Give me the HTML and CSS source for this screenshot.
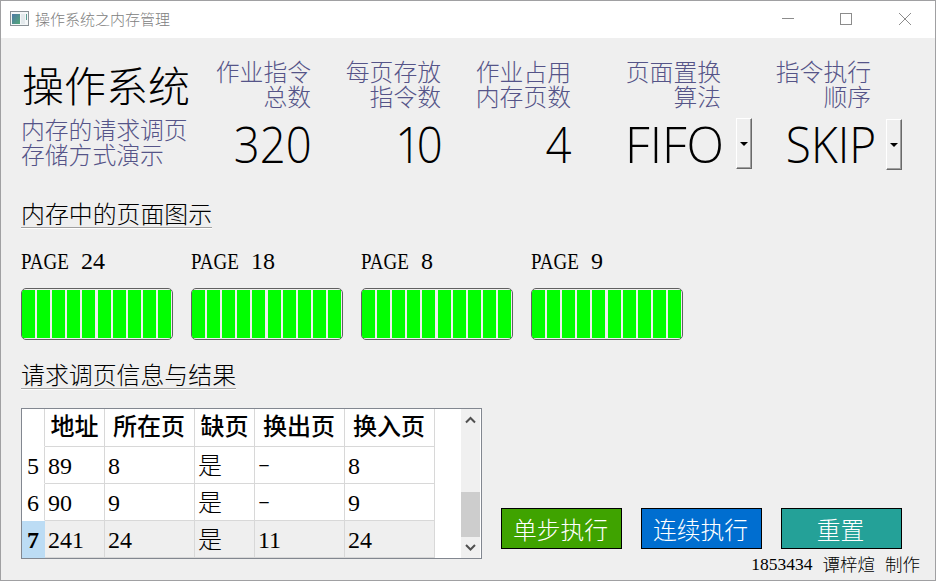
FILE: index.html
```html
<!DOCTYPE html>
<html lang="zh-CN">
<head>
<meta charset="utf-8">
<title>操作系统之内存管理</title>
<link rel="stylesheet" href="styles.css">
</head>
<body>
<div class="window">
  <header class="titlebar">
    <svg class="app-icon" width="20" height="16" viewBox="0 0 20 16">
      <defs><linearGradient id="g" x1="0" y1="0" x2="1" y2="1"><stop offset="0" stop-color="#4d78a6"/><stop offset="1" stop-color="#53a878"/></linearGradient></defs>
      <rect x="0.5" y="0.5" width="18" height="14" fill="#f4f7f8" stroke="#899196"/>
      <rect x="2" y="3" width="8" height="10" fill="url(#g)"/>
      <rect x="11" y="3" width="4" height="10" fill="#e3e9ec"/>
      <rect x="16" y="3" width="1" height="6" fill="#5b9c91"/>
    </svg>
    <span class="window-title">操作系统之内存管理</span>
    <svg class="controls" width="132" height="14" viewBox="0 0 132 14" fill="none" stroke="#8c8c8c">
      <path d="M0 6.5h12"/><rect x="58.500" y="1.500" width="11" height="11"/><path d="M117 1l12 12M129 1l-12 12"/>
    </svg>
  </header>
  <main class="content">
    <section class="summary">
      <div class="intro"><h1>操作系统</h1><p class="label"><span>内存的请求调页</span><span>存储方式演示</span></p></div>
      <div class="stat"><p class="label"><span>作业指令</span><span>总数</span></p><div class="value"><span class="num">320</span></div></div>
      <div class="stat"><p class="label"><span>每页存放</span><span>指令数</span></p><div class="value"><span class="num ten">10</span></div></div>
      <div class="stat"><p class="label"><span>作业占用</span><span>内存页数</span></p><div class="value"><span class="num">4</span></div></div>
      <div class="stat wide"><p class="label"><span>页面置换</span><span>算法</span></p><div class="value"><span class="num fifo">FIFO</span></div></div>
      <button class="drop"></button>
      <div class="stat order"><p class="label"><span>指令执行</span><span>顺序</span></p><div class="value"><span class="num skip">SKIP</span></div></div>
      <button class="drop second"></button>
    </section>
    <h2 class="heading">内存中的页面图示</h2>
    <section class="pages">
      <div class="page"><div class="page-name"><span class="word">PAGE</span><span>24</span></div><div class="bar"><i></i><i></i><i></i><i></i><i></i><i></i><i></i><i></i><i></i><i></i></div></div>
      <div class="page"><div class="page-name"><span class="word">PAGE</span><span>18</span></div><div class="bar"><i></i><i></i><i></i><i></i><i></i><i></i><i></i><i></i><i></i><i></i></div></div>
      <div class="page"><div class="page-name"><span class="word">PAGE</span><span>8</span></div><div class="bar"><i></i><i></i><i></i><i></i><i></i><i></i><i></i><i></i><i></i><i></i></div></div>
      <div class="page"><div class="page-name"><span class="word">PAGE</span><span>9</span></div><div class="bar"><i></i><i></i><i></i><i></i><i></i><i></i><i></i><i></i><i></i><i></i></div></div>
    </section>
    <h2 class="heading results">请求调页信息与结果</h2>
    <section class="bottom">
      <div class="table-box">
        <table>
          <colgroup><col class="c0"><col class="c60"><col class="c90"><col class="c60"><col class="c90"><col class="c90"></colgroup>
          <tr class="head"><th></th><th>地址</th><th>所在页</th><th>缺页</th><th>换出页</th><th>换入页</th></tr>
          <tr><td>5</td><td>89</td><td>8</td><td>是</td><td><span class="dash">-</span></td><td>8</td></tr>
          <tr><td>6</td><td>90</td><td>9</td><td>是</td><td><span class="dash">-</span></td><td>9</td></tr>
          <tr class="current"><td>7</td><td>241</td><td>24</td><td>是</td><td>11</td><td>24</td></tr>
        </table>
        <div class="scrollbar">
          <svg width="19" height="24" viewBox="0 0 19 24" fill="none" stroke="#505050" stroke-width="2"><path d="M5 13.500l4.500-4.500L14 13.500"/></svg>
          <div class="thumb"></div>
          <svg width="19" height="21" viewBox="0 0 19 21" fill="none" stroke="#505050" stroke-width="2"><path d="M5 8l4.500 4.500L14 8"/></svg>
        </div>
      </div>
      <div class="actions">
        <div class="buttons"><button class="btn green">单步执行</button><button class="btn blue">连续执行</button><button class="btn teal">重置</button></div>
        <div class="credit"><span class="id">1853434</span><span>谭梓煊</span><span>制作</span></div>
      </div>
    </section>
  </main>
</div>
</body>
</html>
```
FILE: styles.css
```css
* { box-sizing: border-box; margin: 0; padding: 0; }
body { font-family: "Noto Sans CJK SC", sans-serif; font-weight: 300; color: #000; }
.window { width: 936px; height: 581px; border: 1px solid #a0a0a2; background: #efefef; overflow: hidden; }
.titlebar { height: 37px; background: #fff; display: flex; align-items: center; padding: 0 21px 0 9px; }
.app-icon { margin-top: -1px; }
.window-title { font-size: 15px; color: #808080; margin: -2px 0 0 5px; flex: 1; }
.controls { margin-top: -2px; }
.content { padding-left: 20px; }
.summary { display: flex; height: 150px; padding-top: 21px; }
.intro { width: 170px; white-space: nowrap; }
h1 { font-size: 42px; font-weight: 300; line-height: 49px; height: 58px; padding-left: 1px; }
.label { font-size: 23.800px; line-height: 25px; color: #555488; white-space: nowrap; margin-top: -1px; margin-bottom: 1px; }
.stat .label { padding-right: 1px; }
.label span { display: block; }
.stat { width: 121px; text-align: right; }
.stat + .stat { width: 130px; }
.stat.wide { width: 150px; }
.stat.order { width: 120px; }
.value { height: 64px; line-height: 71px; font-family: "Open Sans", sans-serif; font-size: 50px; font-weight: 300; white-space: nowrap; }
.num { display: inline-block; transform-origin: right center; transform: scaleX(.91); }
.ten { letter-spacing: -5px; transform: translateX(-4px) scaleX(.91); }
.fifo { transform: translateX(2px) scaleX(.98); }
.skip { transform: translateX(4px) scaleX(.92); }
.drop { width: 16px; height: 51px; margin: 59px 0 0 14px; border: 1px solid; border-color: #fff #696969 #696969 #fff; box-shadow: inset -1px -1px #a0a0a0; background: #efefef; display: flex; align-items: center; justify-content: center; }
.drop::after { content: ""; border: 4px solid transparent; border-top-color: #000; border-bottom: 0; }
.drop.second { margin-top: 60px; }
.heading { font-size: 23.900px; font-weight: 300; line-height: 28px; height: 29px; width: max-content; border-bottom: 1px solid #a0a0a0; box-shadow: 0 1px #fff; margin-top: 11px; }
.pages { display: flex; gap: 18px; margin-top: 18px; }
.page { width: 152px; }
.page-name { display: flex; font: 24px/30px "Liberation Serif", serif; height: 42px; }
.word { width: 60px; display: block; transform: scaleX(.79); transform-origin: left; }
.bar { height: 52px; border: 1px solid #606060; border-radius: 5px; padding: 1px 1px 1px 0; display: flex; gap: 2px; overflow: hidden; }
.bar i { width: 13px; background: #0f0; flex: none; }
.bar i:nth-child(5) { margin-right: 1px; }
.results { margin-top: 20px; }
.bottom { display: flex; margin-top: 19px; }
.table-box { width: 461px; height: 151px; border: 1px solid #828790; background: #fff; display: flex; justify-content: space-between; padding-right: 1px; }
table { border-collapse: separate; border-spacing: 0; table-layout: fixed; width: 413px; height: 149px; }
.c0 { width: 23px; }
.c60 { width: 60px; }
.c90 { width: 90px; }
tr { height: 37px; }
.head { height: 38px; }
th, td { border-right: 1px solid #d8d8d8; border-bottom: 1px solid #d8d8d8; white-space: nowrap; }
th { font-size: 24px; font-weight: 500; line-height: 32px; text-align: center; padding: 0 1px 5px 0; }
th:nth-child(2), th:nth-child(4) { padding-right: 0; }
td { font-family: "Liberation Serif", "Noto Sans CJK SC", serif; font-size: 24px; line-height: 34px; padding: 2px 0 0 3px; }
td:first-child, th:first-child { border-bottom-color: transparent; }
td:first-child { text-align: center; padding: 2px 0 0; }
.dash { display: inline-block; transform: translateY(-2px) scale(1.500, .7); transform-origin: left; }
.current { background: #efefef; }
.current td:first-child { background: #bcdcf4; font-weight: bold; border-color: #bcdcf4; }
.scrollbar { width: 19px; background: #f0f0f0; display: flex; flex-direction: column; }
.scrollbar svg { display: block; }
.thumb { height: 45px; margin-top: auto; background: #cdcdcd; }
.actions { width: 439px; padding: 100px 0 0 19px; }
.buttons { display: flex; gap: 19px; }
.btn { width: 121px; height: 41px; border: 1px solid #000; color: #fff; font: 300 23.800px/38px "Noto Sans CJK SC", sans-serif; padding-right: 2px; }
.green { background: #3fa300; }
.blue { background: #006ed0; }
.teal { background: #24a198; }
.credit { display: flex; justify-content: flex-end; gap: 10px; font-size: 17.500px; line-height: 28px; margin-top: 1px; padding-right: 1px; white-space: nowrap; }
.id { font-family: "Liberation Serif", serif; }
```
